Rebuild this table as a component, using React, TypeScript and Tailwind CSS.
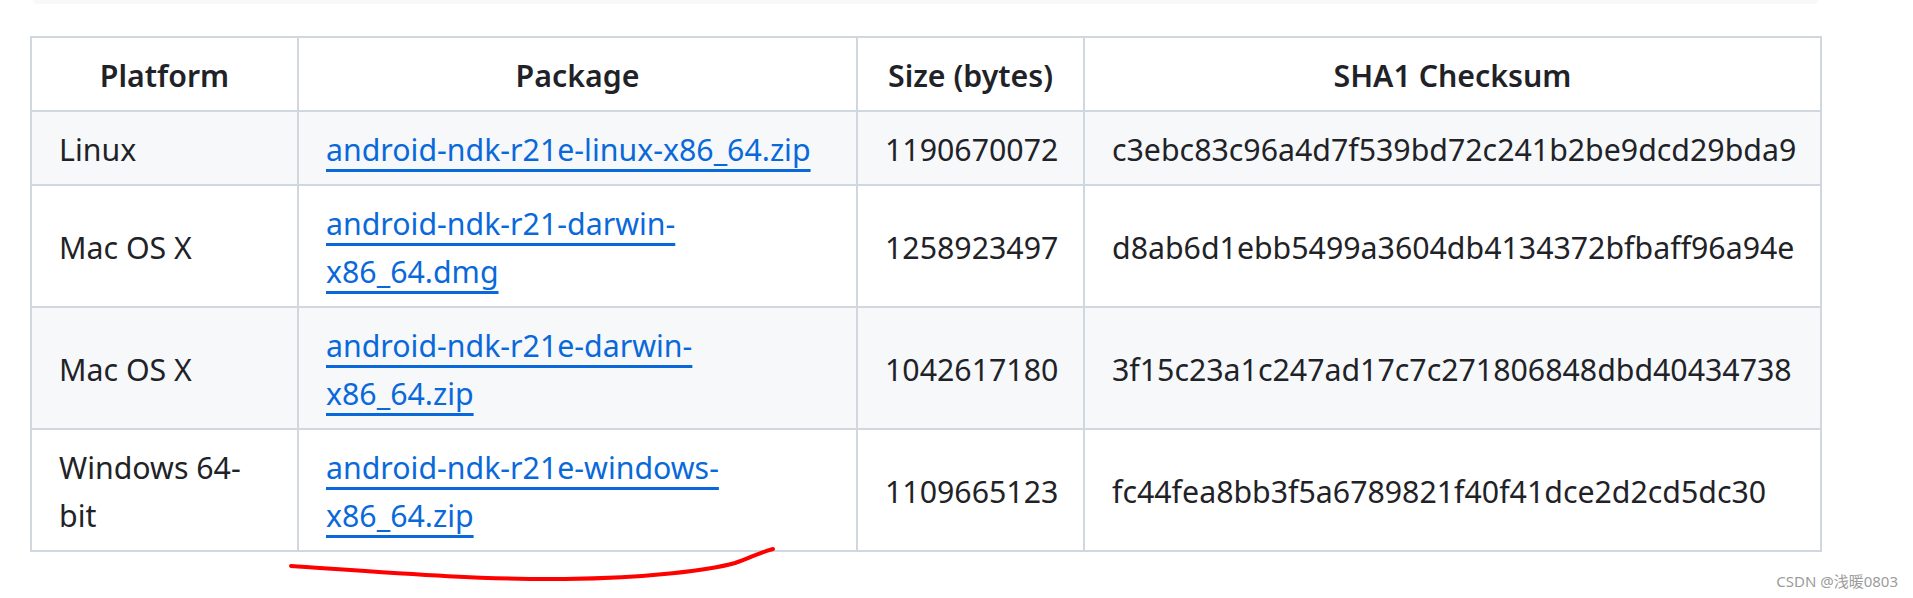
import React from 'react';

const rows = [
  { platform: 'Linux', pkg: 'android-ndk-r21e-linux-x86_64.zip', size: '1190670072', sha: 'c3ebc83c96a4d7f539bd72c241b2be9dcd29bda9', striped: true },
  { platform: 'Mac OS X', pkg: 'android-ndk-r21-darwin-x86_64.dmg', size: '1258923497', sha: 'd8ab6d1ebb5499a3604db4134372bfbaff96a94e', striped: false },
  { platform: 'Mac OS X', pkg: 'android-ndk-r21e-darwin-x86_64.zip', size: '1042617180', sha: '3f15c23a1c247ad17c7c271806848dbd40434738', striped: true },
  { platform: 'Windows 64-bit', pkg: 'android-ndk-r21e-windows-x86_64.zip', size: '1109665123', sha: 'fc44fea8bb3f5a6789821f40f41dce2d2cd5dc30', striped: false },
];

const headers = ['Platform', 'Package', 'Size (bytes)', 'SHA1 Checksum'];

export default function App() {
  return (
    <div className="relative h-[598px] w-full overflow-hidden bg-white pl-[30px] font-['Noto_Sans',sans-serif] text-[#1f2328]">
      {/* bottom edge of the block above */}
      <div className="ml-[3px] h-[4px] w-[1785px] rounded-b-[6px] bg-[#f6f8fa]" />

      <div className="mt-[32px] grid w-[1792px] grid-cols-[267px_559px_227px_737px] border-t-2 border-l-2 border-[#d0d7de] text-[30.3px] leading-[48px]">
        {headers.map((h) => (
          <div key={h} className="flex items-center justify-center border-r-2 border-b-2 border-[#d0d7de] bg-white px-[27px] pt-[14px] pb-[10px] font-semibold">
            {h}
          </div>
        ))}
        {rows.map((r, i) => {
          const bg = r.striped ? 'bg-[#f6f8fa]' : 'bg-white';
          return (
            <React.Fragment key={i}>
              <div className={`flex items-center border-r-2 border-b-2 border-[#d0d7de] px-[27px] pt-[14px] pb-[10px] ${bg}`}>
                {r.platform}
              </div>
              <div className={`flex items-center border-r-2 border-b-2 border-[#d0d7de] px-[27px] pt-[14px] pb-[10px] ${bg}`}>
                <a href="#" className="text-[#0969da] underline decoration-[3px] underline-offset-[8px]">
                  {r.pkg}
                </a>
              </div>
              <div className={`flex items-center border-r-2 border-b-2 border-[#d0d7de] px-[27px] pt-[14px] pb-[10px] ${bg}`}>
                {r.size}
              </div>
              <div className={`flex items-center border-r-2 border-b-2 border-[#d0d7de] px-[27px] pt-[14px] pb-[10px] ${bg}`}>
                {r.sha}
              </div>
            </React.Fragment>
          );
        })}
      </div>

      {/* red marker stroke under the Windows package */}
      <svg className="pointer-events-none absolute left-0 top-0" width="1913" height="598">
        <path
          d="M291 566 C 380 572, 480 580, 565 579 C 650 578, 710 570, 735 563 C 750 558, 758 553, 773 549"
          fill="none"
          stroke="#ff0000"
          strokeWidth="4"
          strokeLinecap="round"
        />
      </svg>

      <div className="absolute right-[15px] top-[571px] text-[15px] leading-[20px] text-[#9c9c9c] font-['Noto_Sans','Noto_Sans_CJK_SC',sans-serif]">
        CSDN @浅暖0803
      </div>
    </div>
  );
}
